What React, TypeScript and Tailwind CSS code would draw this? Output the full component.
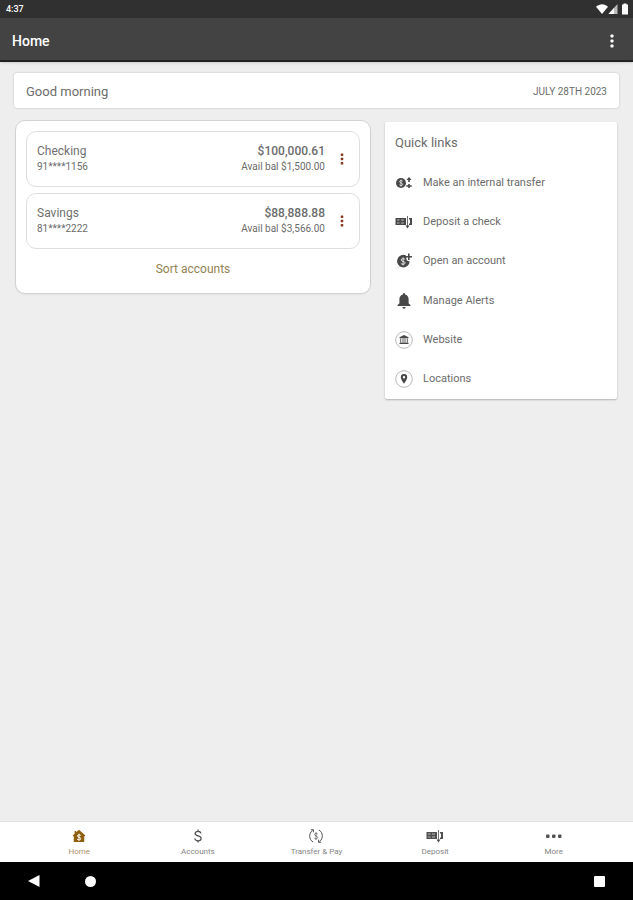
import type { ReactNode } from "react";

type IconProps = { className?: string };

const ACCOUNTS = [
  { name: "Checking", number: "91****1156", balance: "$100,000.61", available: "$1,500.00" },
  { name: "Savings", number: "81****2222", balance: "$88,888.88", available: "$3,566.00" },
];

function KebabIcon({ className }: IconProps) {
  return (
    <svg viewBox="0 0 4 14" className={className} fill="currentColor" aria-hidden="true">
      <rect x="0.5" y="0.5" width="3" height="3" rx="0.8" />
      <rect x="0.5" y="5.5" width="3" height="3" rx="0.8" />
      <rect x="0.5" y="10.5" width="3" height="3" rx="0.8" />
    </svg>
  );
}

function InternalTransferIcon({ className }: IconProps) {
  return (
    <svg viewBox="0 0 18 14" className={className} fill="currentColor" aria-hidden="true">
      <circle cx="6" cy="7" r="5" />
      <path
        d="M7.700 5.200C7.300 4.400 4.500 4.200 4.500 5.700S7.700 6.800 7.700 8.400 4.700 9.700 4.300 8.700M6 3.500v7"
        fill="none"
        stroke="#fff"
        strokeWidth="0.7"
      />
      <path d="M14 1l2.600 3h-1.800v2h-1.600V4h-1.800z" />
      <path d="M13.200 8h1.600v1.300h1.900v1.500H14.800V12h-1.600v-1.200h-1.900V9.300h1.900z" />
    </svg>
  );
}

function DepositIcon({ className }: IconProps) {
  return (
    <svg viewBox="0 0 18 14" className={className} aria-hidden="true">
      <path d="M0.500 3h10.500v7H0.500z" fill="currentColor" />
      <path d="M2 5h2.500M2 8h2.500M6 5h3M6 8h3" stroke="#fff" strokeWidth="0.6" />
      <path d="M12.500 1v10" stroke="currentColor" strokeWidth="0.8" />
      <path d="M10.500 10.500h4l-2 3z" fill="currentColor" />
      <path d="M14 3h3v7h-3V8.500h1v-4h-1z" fill="currentColor" />
    </svg>
  );
}

function OpenAccountIcon({ className }: IconProps) {
  return (
    <svg viewBox="0 0 16 16" className={className} fill="currentColor" aria-hidden="true">
      <path d="M9.800 2.300A6.300 6.300 0 1 0 13.700 8.500L10.800 7.500z" />
      <path
        d="M9.200 6.400C8.600 5.400 5 5.500 5 7s4.200 1.100 4.200 2.900-3.600 1.700-4.400.5M7.100 4.400v8"
        fill="none"
        stroke="#fff"
        strokeWidth="0.8"
      />
      <path d="M12 .5h1.600v2.400H16v1.600h-2.400v2.400H12V4.500H9.600V2.900H12z" />
    </svg>
  );
}

function BellIcon({ className }: IconProps) {
  return (
    <svg viewBox="0 0 16 16" className={className} fill="currentColor" aria-hidden="true">
      <path d="M7 1.600V1a1 1 0 0 1 2 0v.6c2.300.5 3.600 2.300 3.600 4.800v3.800l1.900 2v.8h-13v-.8l1.900-2V6.400c0-2.500 1.300-4.300 3.600-4.800z" />
      <path d="M6.300 14h3.400a1.700 1.700 0 0 1-3.400 0z" />
    </svg>
  );
}

function WebsiteIcon({ className }: IconProps) {
  return (
    <svg viewBox="0 0 18 18" className={className} aria-hidden="true">
      <circle cx="9" cy="9" r="8.300" fill="none" stroke="#8c8c8c" strokeWidth="0.6" />
      <path d="M9 4l4.500 2.300v1h-9v-1z" fill="currentColor" />
      <path d="M5.700 7.500v4M8 7.500v4M10 7.500v4M12.300 7.500v4" stroke="currentColor" strokeWidth="0.9" />
      <path d="M4.500 11.600h9v1.400h-9z" fill="currentColor" />
    </svg>
  );
}

function LocationIcon({ className }: IconProps) {
  return (
    <svg viewBox="0 0 18 18" className={className} aria-hidden="true">
      <circle cx="9" cy="9" r="8.300" fill="none" stroke="#8c8c8c" strokeWidth="0.6" />
      <path
        d="M9 4a3.200 3.200 0 0 0-3.200 3.200C5.800 9.600 9 13.500 9 13.500s3.200-3.900 3.200-6.300A3.200 3.200 0 0 0 9 4zm0 2a1.200 1.200 0 1 1 0 2.400A1.200 1.200 0 0 1 9 6z"
        fill="currentColor"
      />
    </svg>
  );
}

function HomeIcon({ className }: IconProps) {
  return (
    <svg viewBox="0 0 14 14" className={className} aria-hidden="true">
      <path d="M7 .8L13.400 6.500l-.8.9-.4-.3V13H1.800V7.100l-.4.3-.8-.9L2.600 4.700V2h1.600v1.300z" fill="currentColor" />
      <path
        d="M8.800 6.500C8.200 5.500 5.400 5.700 5.400 7s3.400 1 3.400 2.700-3 1.500-3.700.4M7 4.700v7"
        fill="none"
        stroke="#fff"
        strokeWidth="1"
      />
    </svg>
  );
}

function DollarIcon({ className }: IconProps) {
  return (
    <svg viewBox="0 0 14 14" className={className} aria-hidden="true">
      <path
        d="M10 4.300C9.700 3 8.600 2.300 7 2.300c-1.700 0-2.900.8-2.900 2.200 0 3.300 6 1.600 6 5 0 1.500-1.300 2.300-3.100 2.300S4 11 3.800 9.500M7 .5v2M7 11.600v2"
        fill="none"
        stroke="currentColor"
        strokeWidth="1.2"
      />
    </svg>
  );
}

function TransferIcon({ className }: IconProps) {
  return (
    <svg viewBox="0 0 16 16" className={className} fill="none" stroke="currentColor" aria-hidden="true">
      <path d="M5 14C.8 11.500.6 5.200 4.500 2.500M11 2c4.200 2.500 4.400 8.800.5 11.500" strokeWidth="1" />
      <path d="M2.800 1.900l2.600-.3v2.700M13.200 14.100l-2.600.3v-2.700" strokeWidth="1" />
      <path d="M9.600 6C9 5 6.500 5.200 6.500 6.600S9.700 7.800 9.700 9.500s-2.700 1.600-3.400.6M8 4v8" strokeWidth="0.7" />
    </svg>
  );
}

function MoreIcon({ className }: IconProps) {
  return (
    <svg viewBox="0 0 18 14" className={className} fill="currentColor" aria-hidden="true">
      <rect x="1" y="5.500" width="3.500" height="3.500" rx="1" />
      <rect x="7" y="5.500" width="3.500" height="3.500" rx="1" />
      <rect x="13" y="5.500" width="3.500" height="3.500" rx="1" />
    </svg>
  );
}

const QUICK_LINKS: { label: string; icon: ReactNode }[] = [
  { label: "Make an internal transfer", icon: <InternalTransferIcon className="h-3.5 w-[18px]" /> },
  { label: "Deposit a check", icon: <DepositIcon className="h-3.5 w-[18px]" /> },
  { label: "Open an account", icon: <OpenAccountIcon className="size-4" /> },
  { label: "Manage Alerts", icon: <BellIcon className="size-4" /> },
  { label: "Website", icon: <WebsiteIcon className="size-[18px]" /> },
  { label: "Locations", icon: <LocationIcon className="size-[18px]" /> },
];

const TABS: { label: string; icon: ReactNode; active?: boolean }[] = [
  { label: "Home", icon: <HomeIcon className="size-3.5" />, active: true },
  { label: "Accounts", icon: <DollarIcon className="size-3.5" /> },
  { label: "Transfer & Pay", icon: <TransferIcon className="size-4" /> },
  { label: "Deposit", icon: <DepositIcon className="h-3.5 w-[18px]" /> },
  { label: "More", icon: <MoreIcon className="h-3.5 w-[18px]" /> },
];

function StatusBar() {
  return (
    <div className="flex h-[18px] items-center justify-between bg-[#303030] pr-1 pl-1.5 text-white">
      <span className="text-[9px] leading-none font-medium">4:37</span>
      <svg viewBox="0 0 33 12" className="h-3 w-[33px]" aria-hidden="true">
        <path d="M0 3.800C3.500.4 8.500.4 12 3.800L6 11z" fill="#fff" />
        <path d="M21.500 1v10h-9z" fill="#bbb" />
        <path d="M18 5v6h-5.500z" fill="#fff" />
        <path d="M26 1.500h1.500v-1h3v1H32V11.500h-6z" fill="#fff" />
      </svg>
    </div>
  );
}

function AccountCard({ account }: { account: (typeof ACCOUNTS)[number] }) {
  return (
    <li className="flex h-14 items-center rounded-[10px] border border-[#dedede] px-2.5">
      <div className="flex-1">
        <p className="text-[12px] leading-4 text-[#707070]">{account.name}</p>
        <p className="text-[10px] leading-4">{account.number}</p>
      </div>
      <div className="text-right">
        <p className="text-[12px] leading-4 font-medium">{account.balance}</p>
        <p className="text-[10px] leading-4">Avail bal {account.available}</p>
      </div>
      <button
        type="button"
        aria-label={`${account.name} options`}
        className="ml-2.5 flex w-3.5 justify-center text-[#86391c]"
      >
        <KebabIcon className="h-3 w-1" />
      </button>
    </li>
  );
}

export default function App() {
  return (
    <div className="flex min-h-screen flex-col bg-[#eeeeee] font-[Roboto,'Liberation_Sans',sans-serif] text-[#6c6c6c]">
      <StatusBar />
      <header className="flex h-11 items-center justify-between border-b-2 border-[#222] bg-[#434343] pt-1 pr-[19px] pl-3 text-white shadow-sm">
        <h1 className="text-[14px] leading-4 font-medium">Home</h1>
        <button type="button" aria-label="More options">
          <KebabIcon className="h-3.5 w-1" />
        </button>
      </header>

      <main className="flex-1 px-3.5 pt-[11px]">
        <section className="flex h-[35px] items-center justify-between rounded-[3px] bg-white px-3 shadow-[0_0_2px_rgba(0,0,0,0.25)]">
          <h2 className="pt-0.5 text-[13px] leading-4">Good morning</h2>
          <p className="pt-0.5 text-[10px] leading-4">JULY 28TH 2023</p>
        </section>

        <div className="mt-3 grid grid-cols-[356fr_232fr] items-start gap-3.5 pr-0.5 pl-px">
          <section className="rounded-[10px] border border-[#d2d2d2] bg-white px-2.5 pt-2.5 pb-4 shadow-xs">
            <ul className="flex flex-col gap-1.5">
              {ACCOUNTS.map((account) => (
                <AccountCard key={account.name} account={account} />
              ))}
            </ul>
            <button type="button" className="mx-auto mt-3 block text-[12px] leading-4 text-[#938253]">
              Sort accounts
            </button>
          </section>

          <section className="mt-0.5 rounded-[2px] bg-white px-2.5 pt-[13px] shadow-[0_1px_2px_rgba(0,0,0,0.25)]">
            <h2 className="text-[13px] leading-4">Quick links</h2>
            <ul className="grid h-[248px] grid-rows-6 pt-3">
              {QUICK_LINKS.map((link) => (
                <li key={link.label} className="flex items-center">
                  <a href="#" className="flex items-center gap-2.5 text-[11px] leading-4">
                    <span className="flex w-[18px] justify-center text-[#484848]">{link.icon}</span>
                    {link.label}
                  </a>
                </li>
              ))}
            </ul>
          </section>
        </div>
      </main>

      <nav className="grid h-[41px] grid-cols-5 border-t border-[#e2e2e2] bg-white px-5">
        {TABS.map((tab) => (
          <a
            key={tab.label}
            href="#"
            aria-current={tab.active ? "page" : undefined}
            className="flex flex-col items-center pt-1.5 text-[8px] leading-3"
          >
            <span className={tab.active ? "flex h-4 items-center text-[#8f5f10]" : "flex h-4 items-center text-[#505050]"}>
              {tab.icon}
            </span>
            <span className={tab.active ? "mt-0.5 text-[#ab9065]" : "mt-0.5 text-[#858585]"}>{tab.label}</span>
          </a>
        ))}
      </nav>

      <div className="flex h-[38px] items-center bg-black px-7 text-white">
        <button type="button" aria-label="Back">
          <svg viewBox="0 0 12 12" className="size-3" fill="currentColor">
            <path d="M11.500 0v12L0 6z" />
          </svg>
        </button>
        <button type="button" aria-label="Home" className="ml-[45px] size-[11px] rounded-full bg-white" />
        <button type="button" aria-label="Recent apps" className="ml-auto size-[11px] rounded-[1px] bg-white" />
      </div>
    </div>
  );
}
